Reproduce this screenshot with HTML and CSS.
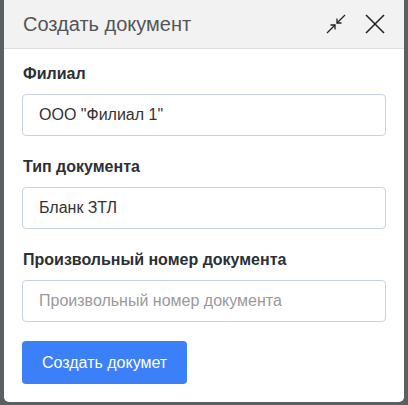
FILE: index.html
```html
<!DOCTYPE html>
<html lang="ru">
<head>
    <meta charset="UTF-8">
    <meta name="viewport" content="width=device-width, initial-scale=1.0">
    <title>Создать документ</title>
    <link rel="stylesheet" href="styles.css">
</head>
<body>
    <div class="overlay"></div>
    <div class="modal">
        <div class="modal-header">
            <span class="modal-title">Создать документ</span>
            <div class="modal-tools">
                <button class="icon-button" title="Свернуть">
                    <svg width="20" height="20" viewBox="0 0 20 20" fill="none" stroke="#222" stroke-width="1.3">
                        <path d="M1 19 L9 11"/>
                        <path d="M4.5 11 H9 V15.5"/>
                        <path d="M19 1 L11 9"/>
                        <path d="M11 4.5 V9 H15.5"/>
                    </svg>
                </button>
                <button class="icon-button" title="Закрыть">
                    <svg width="20" height="20" viewBox="0 0 20 20" fill="none" stroke="#222" stroke-width="1.6">
                        <path d="M1 1 L19 19"/>
                        <path d="M19 1 L1 19"/>
                    </svg>
                </button>
            </div>
        </div>
        <div class="modal-body">
            <div class="field">
                <label class="field-label">Филиал</label>
                <input class="field-input" type="text" value="ООО &quot;Филиал 1&quot;">
            </div>
            <div class="field">
                <label class="field-label">Тип документа</label>
                <input class="field-input" type="text" value="Бланк ЗТЛ">
            </div>
            <div class="field">
                <label class="field-label">Произвольный номер документа</label>
                <input class="field-input" type="text" placeholder="Произвольный номер документа">
            </div>
            <button class="submit-button">Создать докумет</button>
        </div>
    </div>
</body>
</html>
```

FILE: styles.css
```css
body {
    margin: 0;
    background-color: #5b5f61;
    font-family: "Liberation Sans", Arial, sans-serif;
}
.overlay {
    position: fixed;
    inset: 0;
    background-color: #5b5f61;
}
.modal {
    position: fixed;
    top: 0;
    left: 4px;
    width: 400px;
    height: 402px;
    background-color: #fff;
    border-radius: 0 0 5px 5px;
    overflow: hidden;
}
.modal-header {
    display: flex;
    justify-content: space-between;
    align-items: center;
    height: 48px;
    padding: 0 19px 0 19px;
    background-color: #f2f2f2;
    border-bottom: 1px solid #dedede;
}
.modal-title {
    font-size: 20px;
    color: #555;
    padding-top: 1px;
}
.modal-tools {
    display: flex;
    align-items: center;
    gap: 19px;
}
.icon-button {
    display: flex;
    padding: 0;
    border: none;
    background: none;
    cursor: pointer;
}
.modal-body {
    padding: 12px 18px 0 18px;
}
.field {
    display: flex;
    flex-direction: column;
    margin-bottom: 18px;
}
.field-label {
    font-size: 16px;
    font-weight: bold;
    color: #2b3036;
    line-height: 22px;
    padding: 2px 0 9px 1px;
}
.field-input {
    height: 42px;
    box-sizing: border-box;
    padding: 0 16px;
    border: 1px solid #c6d1e2;
    border-radius: 4px;
    font-family: inherit;
    font-size: 16px;
    color: #333;
}
.field-input::placeholder {
    color: #999;
}
.submit-button {
    align-self: flex-start;
    margin-top: 1px;
    height: 43px;
    padding: 0 20px;
    border: none;
    border-radius: 4px;
    background-color: #3b80f8;
    color: #fff;
    font-family: inherit;
    font-size: 16px;
    cursor: pointer;
}
```
